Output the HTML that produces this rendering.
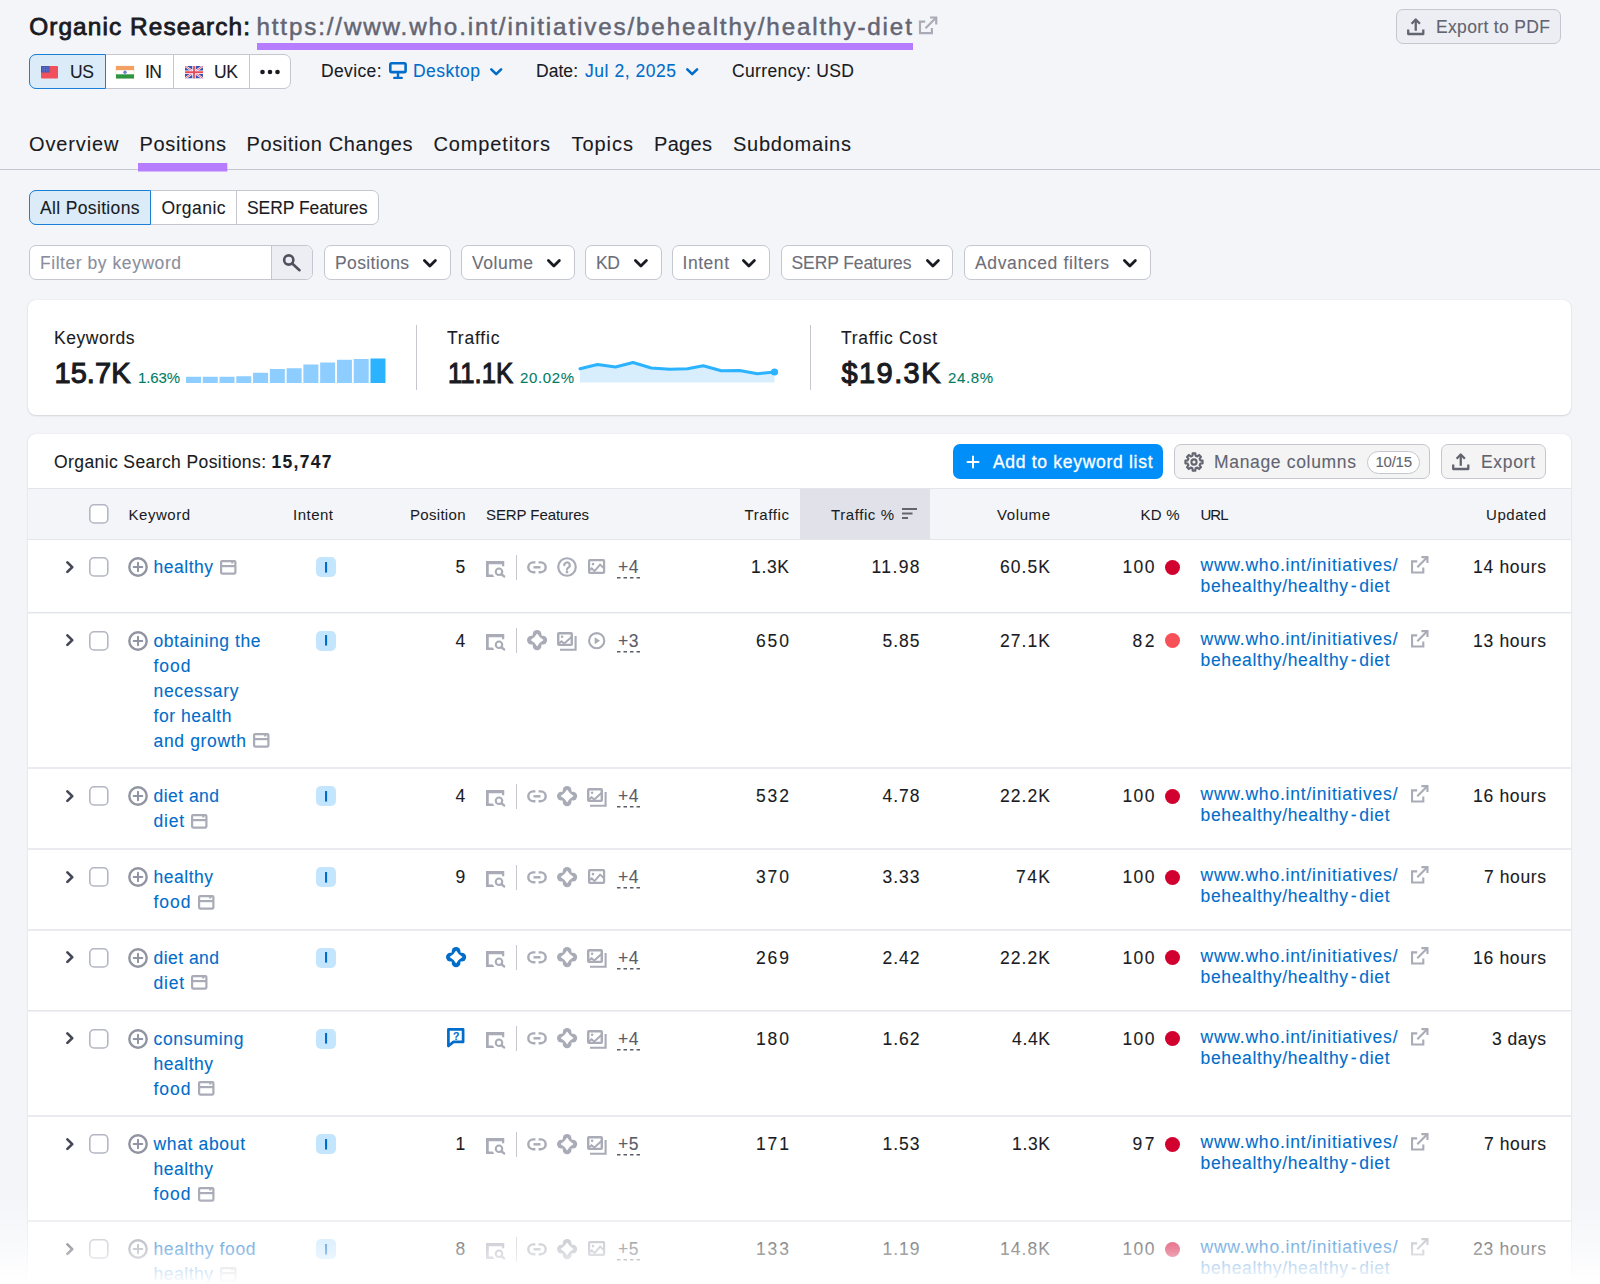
<!DOCTYPE html>
<html lang="en"><head>
<meta charset="utf-8">
<title>Organic Research</title>
<style>
*{box-sizing:border-box;margin:0;padding:0}
html,body{width:1600px;height:1284px;overflow:hidden}
body{background:#f4f5f9;font-family:"Liberation Sans",sans-serif;color:#191b23;position:relative;font-size:17.5px}
.t{position:absolute;white-space:nowrap;-webkit-text-stroke:0.1px currentColor}
.b{position:absolute;display:block;overflow:visible}
</style>
</head>
<body>
<div class="t" style="left: 29.2px; top: 10.8px; font-size: 24.4px; line-height: 32px; font-weight: normal; color: rgb(25, 27, 35); -webkit-text-stroke: 0.85px rgb(25, 27, 35); letter-spacing: 1.091px;">Organic Research:</div>
<div class="t" style="left: 256.4px; top: 11.3px; font-size: 24.2px; line-height: 31px; font-weight: normal; color: rgb(99, 101, 115); -webkit-text-stroke: 0.5px rgb(99, 101, 115); letter-spacing: 1.866px;">https://www.who.int/initiatives/behealthy/healthy-diet</div>
<div class="b" style="left:256.5px;top:42.8px;width:656.6px;height:6.9px;background:#b77dff"></div>
<svg class="b" style="left:919px;top:16px" width="19" height="19" viewBox="0 0 19 19" fill="none" stroke="#a9abb6" stroke-width="2.200"><path d="M6.200 5.560H1V17.100H12.900V12.100"></path><path d="M11 1.500H17.250V8.400"></path><path d="M17.250 1.500L6.500 12.250"></path></svg>
<div class="b" style="left:1396px;top:9px;width:165px;height:35px;background:#eceef3;border:1px solid #c4c7cf;border-radius:7px"></div>
<svg class="b" style="left:1406.9px;top:18.1px" width="17.5" height="17.2" viewBox="0 0 17.5 17.2" fill="none" stroke="#62646f" stroke-width="2.300" stroke-linejoin="round"><path d="M8.750 1.600V12.800"></path><path d="M4.600 5.700L8.750 1.500L12.900 5.700"></path><path d="M1.200 11.400V16H16.300V11.400"></path></svg>
<div class="t" style="left: 1436px; top: 15.8px; font-size: 17.5px; line-height: 23px; font-weight: normal; color: rgb(98, 100, 111); letter-spacing: 0.341px;">Export to PDF</div>
<div class="b" style="left:29px;top:54px;width:262px;height:35px;background:#fff;border:1px solid #c4c7cf;border-radius:7px"></div>
<div class="b" style="left:29px;top:54px;width:76.5px;height:35px;background:#dcebf8;border:1.5px solid #1a7fd6;border-radius:7px 0 0 7px"></div>
<div class="b" style="left:173px;top:55px;width:1px;height:33px;background:#c4c7cf"></div>
<div class="b" style="left:249px;top:55px;width:1px;height:33px;background:#c4c7cf"></div>
<svg class="b" style="left:41px;top:66.2px" width="17" height="12.5" viewBox="0 0 17 12.5"><rect width="17" height="12.500" rx="1" fill="#f0505c"></rect><rect width="8.500" height="6.500" fill="#4456b4"></rect><path d="M1.500 1.800h6M1.500 3.400h6M1.500 5h6" stroke="#8e9be0" stroke-width="0.700" stroke-dasharray="0.800 0.900"></path></svg>
<div class="t" style="left: 70px; top: 60.8px; font-size: 17.5px; line-height: 23px; font-weight: normal; color: rgb(25, 27, 35); letter-spacing: -0.313px;">US</div>
<svg class="b" style="left:116px;top:66.2px" width="18" height="12.5" viewBox="0 0 18 12.5"><rect width="18" height="12.500" fill="#fff" stroke="#e6d9c8" stroke-width="0.600"></rect><rect width="18" height="4.200" fill="#f3a062"></rect><rect y="8.300" width="18" height="4.200" fill="#2e9440"></rect><circle cx="9" cy="6.250" r="1.700" fill="#6b7fd0"></circle></svg>
<div class="t" style="left: 145px; top: 60.8px; font-size: 17.5px; line-height: 23px; font-weight: normal; color: rgb(25, 27, 35); letter-spacing: -0.5px;">IN</div>
<svg class="b" style="left:185px;top:66.2px" width="18" height="12.5" viewBox="0 0 18 12.5"><clipPath id="ukc"><rect width="18" height="12.500"></rect></clipPath><g clip-path="url(#ukc)"><rect width="18" height="12.500" fill="#3b50b0"></rect><path d="M0 0L18 12.500M18 0L0 12.500" stroke="#fff" stroke-width="2.200"></path><path d="M0 0L18 12.500M18 0L0 12.500" stroke="#e8485c" stroke-width="0.900"></path><path d="M9 0V12.500M0 6.250H18" stroke="#fff" stroke-width="3.400"></path><path d="M9 0V12.500M0 6.250H18" stroke="#e8485c" stroke-width="1.800"></path></g></svg>
<div class="t" style="left: 214px; top: 60.8px; font-size: 17.5px; line-height: 23px; font-weight: normal; color: rgb(25, 27, 35); letter-spacing: -0.313px;">UK</div>
<svg class="b" style="left:260px;top:69px" width="20" height="6" viewBox="0 0 20 6" fill="#191b23"><circle cx="2.500" cy="3" r="2.300"></circle><circle cx="10" cy="3" r="2.300"></circle><circle cx="17.500" cy="3" r="2.300"></circle></svg>
<div class="t" style="left: 321px; top: 59.8px; font-size: 17.5px; line-height: 23px; font-weight: normal; color: rgb(25, 27, 35); letter-spacing: 0.357px;">Device:</div>
<svg class="b" style="left:388.7px;top:62.1px" width="18" height="18" viewBox="0 0 18 18" fill="none" stroke="#006dca"><rect x="1.300" y="1.300" width="15.300" height="8.800" rx="1.300" stroke-width="2.600"></rect><path d="M9 10.500v4.500" stroke-width="2.400"></path><path d="M5.300 15.900h7.400" stroke-width="2.400" stroke-linecap="round"></path></svg>
<div class="t" style="left: 413px; top: 59.8px; font-size: 17.5px; line-height: 23px; font-weight: normal; color: rgb(0, 109, 202); letter-spacing: 0.466px;">Desktop</div>
<svg class="b" style="left:489.8px;top:67.9px" width="12.4" height="7.5" viewBox="0 0 12.4 7.5" fill="none" stroke="#006dca" stroke-width="2.600" stroke-linecap="round" stroke-linejoin="round"><path d="M1.300 1.300l4.900 4.900 4.900-4.900"></path></svg>
<div class="t" style="left: 536px; top: 59.8px; font-size: 17.5px; line-height: 23px; font-weight: normal; color: rgb(25, 27, 35); letter-spacing: 0.043px;">Date:</div>
<div class="t" style="left: 585px; top: 59.8px; font-size: 17.5px; line-height: 23px; font-weight: normal; color: rgb(0, 109, 202); letter-spacing: 0.537px;">Jul 2, 2025</div>
<svg class="b" style="left:685.6px;top:67.9px" width="12.4" height="7.5" viewBox="0 0 12.4 7.5" fill="none" stroke="#006dca" stroke-width="2.600" stroke-linecap="round" stroke-linejoin="round"><path d="M1.300 1.300l4.900 4.900 4.900-4.900"></path></svg>
<div class="t" style="left: 732px; top: 59.8px; font-size: 17.5px; line-height: 23px; font-weight: normal; color: rgb(25, 27, 35); letter-spacing: 0.361px;">Currency: USD</div>
<div class="t" style="left: 29px; top: 131.3px; font-size: 20px; line-height: 26px; font-weight: normal; color: rgb(25, 27, 35); letter-spacing: 0.877px;">Overview</div>
<div class="t" style="left: 139.5px; top: 131.3px; font-size: 20px; line-height: 26px; font-weight: normal; color: rgb(25, 27, 35); letter-spacing: 0.668px;">Positions</div>
<div class="t" style="left: 246.5px; top: 131.3px; font-size: 20px; line-height: 26px; font-weight: normal; color: rgb(25, 27, 35); letter-spacing: 0.615px;">Position Changes</div>
<div class="t" style="left: 433.5px; top: 131.3px; font-size: 20px; line-height: 26px; font-weight: normal; color: rgb(25, 27, 35); letter-spacing: 0.869px;">Competitors</div>
<div class="t" style="left: 571.5px; top: 131.3px; font-size: 20px; line-height: 26px; font-weight: normal; color: rgb(25, 27, 35); letter-spacing: 0.959px;">Topics</div>
<div class="t" style="left: 654px; top: 131.3px; font-size: 20px; line-height: 26px; font-weight: normal; color: rgb(25, 27, 35); letter-spacing: 0.32px;">Pages</div>
<div class="t" style="left: 733px; top: 131.3px; font-size: 20px; line-height: 26px; font-weight: normal; color: rgb(25, 27, 35); letter-spacing: 0.757px;">Subdomains</div>
<div class="b" style="left:0px;top:169.2px;width:1600px;height:1px;background:#c4c7cf"></div>
<svg class="b" style="left:138px;top:163.3px" width="89.3" height="8.5" viewBox="0 0 89.3 8.5"><rect width="89.300" height="8.500" fill="#b77dff"></rect></svg>
<div class="b" style="left:28.5px;top:190.25px;width:350px;height:34.5px;background:#fff;border:1px solid #c4c7cf;border-radius:7px"></div>
<div class="b" style="left:28.5px;top:190.25px;width:122.5px;height:34.5px;background:#dcebf8;border:1.5px solid #1a7fd6;border-radius:7px 0 0 7px"></div>
<div class="b" style="left:236px;top:191.2px;width:1px;height:32.5px;background:#c4c7cf"></div>
<div class="t" style="left: 40px; top: 196.8px; font-size: 17.5px; line-height: 23px; font-weight: normal; color: rgb(25, 27, 35); letter-spacing: 0.348px;">All Positions</div>
<div class="t" style="left: 161.5px; top: 196.8px; font-size: 17.5px; line-height: 23px; font-weight: normal; color: rgb(25, 27, 35); letter-spacing: 0.453px;">Organic</div>
<div class="t" style="left: 247px; top: 196.8px; font-size: 17.5px; line-height: 23px; font-weight: normal; color: rgb(25, 27, 35); letter-spacing: -0.064px;">SERP Features</div>
<div class="b" style="left:28.5px;top:245px;width:284px;height:34.5px;background:#fff;border:1px solid #c4c7cf;border-radius:7px"></div>
<div class="b" style="left:271px;top:246px;width:41px;height:32.5px;background:#eceef3;border-left:1px solid #c4c7cf;border-radius:0 6px 6px 0"></div>
<svg class="b" style="left:283px;top:254px" width="18" height="18" viewBox="0 0 18 18" fill="none" stroke="#4f525e" stroke-width="2.600" stroke-linecap="round"><circle cx="5.750" cy="6" r="4.600"></circle><path d="M9.200 9.500l7.300 6.700"></path></svg>
<div class="t" style="left: 40px; top: 251.8px; font-size: 17.5px; line-height: 23px; font-weight: normal; color: rgb(138, 142, 155); letter-spacing: 0.546px;">Filter by keyword</div>
<div class="b" style="left:323.5px;top:245px;width:127.5px;height:34.5px;background:#fff;border:1px solid #c4c7cf;border-radius:7px"></div>
<div class="t" style="left: 335px; top: 251.8px; font-size: 17.5px; line-height: 23px; font-weight: normal; color: rgb(108, 110, 121); letter-spacing: 0.373px;">Positions</div>
<svg class="b" style="left:422.5px;top:259.4px" width="13.8" height="8.4" viewBox="0 0 13.8 8.4" fill="none" stroke="#191b23" stroke-width="2.800" stroke-linecap="round" stroke-linejoin="round"><path d="M1.400 1.400l5.500 5.500 5.500-5.500"></path></svg>
<div class="b" style="left:460.5px;top:245px;width:114px;height:34.5px;background:#fff;border:1px solid #c4c7cf;border-radius:7px"></div>
<div class="t" style="left: 472px; top: 251.8px; font-size: 17.5px; line-height: 23px; font-weight: normal; color: rgb(108, 110, 121); letter-spacing: 0.525px;">Volume</div>
<svg class="b" style="left:546.5px;top:259.4px" width="13.8" height="8.4" viewBox="0 0 13.8 8.4" fill="none" stroke="#191b23" stroke-width="2.800" stroke-linecap="round" stroke-linejoin="round"><path d="M1.400 1.400l5.500 5.500 5.500-5.500"></path></svg>
<div class="b" style="left:584.5px;top:245px;width:77px;height:34.5px;background:#fff;border:1px solid #c4c7cf;border-radius:7px"></div>
<div class="t" style="left: 596px; top: 251.8px; font-size: 17.5px; line-height: 23px; font-weight: normal; color: rgb(108, 110, 121); letter-spacing: -0.313px;">KD</div>
<svg class="b" style="left:633.5px;top:259.4px" width="13.8" height="8.4" viewBox="0 0 13.8 8.4" fill="none" stroke="#191b23" stroke-width="2.800" stroke-linecap="round" stroke-linejoin="round"><path d="M1.400 1.400l5.500 5.500 5.500-5.500"></path></svg>
<div class="b" style="left:671.5px;top:245px;width:98.5px;height:34.5px;background:#fff;border:1px solid #c4c7cf;border-radius:7px"></div>
<div class="t" style="left: 682.5px; top: 251.8px; font-size: 17.5px; line-height: 23px; font-weight: normal; color: rgb(108, 110, 121); letter-spacing: 0.541px;">Intent</div>
<svg class="b" style="left:742.0px;top:259.4px" width="13.8" height="8.4" viewBox="0 0 13.8 8.4" fill="none" stroke="#191b23" stroke-width="2.800" stroke-linecap="round" stroke-linejoin="round"><path d="M1.400 1.400l5.500 5.500 5.500-5.500"></path></svg>
<div class="b" style="left:780.5px;top:245px;width:172.5px;height:34.5px;background:#fff;border:1px solid #c4c7cf;border-radius:7px"></div>
<div class="t" style="left: 791.5px; top: 251.8px; font-size: 17.5px; line-height: 23px; font-weight: normal; color: rgb(108, 110, 121); letter-spacing: -0.105px;">SERP Features</div>
<svg class="b" style="left:925.5px;top:259.4px" width="13.8" height="8.4" viewBox="0 0 13.8 8.4" fill="none" stroke="#191b23" stroke-width="2.800" stroke-linecap="round" stroke-linejoin="round"><path d="M1.400 1.400l5.500 5.500 5.500-5.500"></path></svg>
<div class="b" style="left:963.5px;top:245px;width:187px;height:34.5px;background:#fff;border:1px solid #c4c7cf;border-radius:7px"></div>
<div class="t" style="left: 975px; top: 251.8px; font-size: 17.5px; line-height: 23px; font-weight: normal; color: rgb(108, 110, 121); letter-spacing: 0.632px;">Advanced filters</div>
<svg class="b" style="left:1123.0px;top:259.4px" width="13.8" height="8.4" viewBox="0 0 13.8 8.4" fill="none" stroke="#191b23" stroke-width="2.800" stroke-linecap="round" stroke-linejoin="round"><path d="M1.400 1.400l5.500 5.500 5.500-5.500"></path></svg>
<div class="b" style="left:28px;top:300px;width:1543px;height:115px;background:#fff;border-radius:7.500px;box-shadow:0 0 1px rgba(25,27,35,.16),0 1px 2px rgba(25,27,35,.12)"></div>
<div class="t" style="left: 54px; top: 326.8px; font-size: 17.5px; line-height: 23px; font-weight: normal; color: rgb(25, 27, 35); letter-spacing: 0.522px;">Keywords</div>
<div class="t" style="left: 54.5px; top: 354.3px; font-size: 29px; line-height: 38px; font-weight: normal; color: rgb(25, 27, 35); -webkit-text-stroke: 1.1px rgb(25, 27, 35); letter-spacing: 0.051px;">15.7K</div>
<div class="t" style="left: 138px; top: 367.8px; font-size: 15px; line-height: 20px; font-weight: normal; color: rgb(0, 124, 101); letter-spacing: -0.137px;">1.63%</div>
<svg class="b" style="left:186.2px;top:357.5px" width="201" height="25" viewBox="0 0 201 25"><rect x="0.00" y="18.75" width="15" height="6.25" fill="#8ecdff"></rect><rect x="16.77" y="18.75" width="15" height="6.25" fill="#8ecdff"></rect><rect x="33.54" y="18.75" width="15" height="6.25" fill="#8ecdff"></rect><rect x="50.31" y="18.25" width="15" height="6.75" fill="#8ecdff"></rect><rect x="67.08" y="14.75" width="15" height="10.25" fill="#8ecdff"></rect><rect x="83.85" y="11.00" width="15" height="14" fill="#8ecdff"></rect><rect x="100.62" y="10.25" width="15" height="14.75" fill="#8ecdff"></rect><rect x="117.39" y="6.50" width="15" height="18.5" fill="#8ecdff"></rect><rect x="134.16" y="4.50" width="15" height="20.5" fill="#8ecdff"></rect><rect x="150.93" y="1.75" width="15" height="23.25" fill="#8ecdff"></rect><rect x="167.70" y="1.00" width="15" height="24" fill="#8ecdff"></rect><rect x="184.47" y="0.50" width="15" height="24.5" fill="#2bb3ff"></rect></svg>
<div class="b" style="left:416px;top:325px;width:1px;height:65px;background:#c4c7cf"></div>
<div class="t" style="left: 447px; top: 326.8px; font-size: 17.5px; line-height: 23px; font-weight: normal; color: rgb(25, 27, 35); letter-spacing: 0.807px;">Traffic</div>
<div class="t" style="left: 447.5px; top: 354.3px; font-size: 29px; line-height: 38px; font-weight: normal; color: rgb(25, 27, 35); -webkit-text-stroke: 1.1px rgb(25, 27, 35); transform: scaleX(0.8827); transform-origin: left center;">11.1K</div>
<div class="t" style="left: 520px; top: 367.8px; font-size: 15px; line-height: 20px; font-weight: normal; color: rgb(0, 124, 101); letter-spacing: 0.625px;">20.02%</div>
<svg class="b" style="left:580px;top:355px" width="200" height="28" viewBox="0 0 200 28"><path d="M0.00 13.75 L17.50 9.50 L35.50 12.00 L53.00 7.50 L71.25 13.00 L90.00 14.25 L107.50 13.75 L123.25 10.75 L141.25 15.75 L159.50 15.50 L177.50 18.75 L194.50 17.00 L194.500 27.500 L0 27.500 Z" fill="#d8eefc"></path><path d="M0.00 13.75 L17.50 9.50 L35.50 12.00 L53.00 7.50 L71.25 13.00 L90.00 14.25 L107.50 13.75 L123.25 10.75 L141.25 15.75 L159.50 15.50 L177.50 18.75 L194.50 17.00" fill="none" stroke="#2bb3ff" stroke-width="3" stroke-linejoin="round" stroke-linecap="round"></path><circle cx="194.500" cy="17" r="3.600" fill="#2bb3ff"></circle></svg>
<div class="b" style="left:810px;top:325px;width:1px;height:65px;background:#c4c7cf"></div>
<div class="t" style="left: 841px; top: 326.8px; font-size: 17.5px; line-height: 23px; font-weight: normal; color: rgb(25, 27, 35); letter-spacing: 0.682px;">Traffic Cost</div>
<div class="t" style="left: 841.5px; top: 354.3px; font-size: 29px; line-height: 38px; font-weight: normal; color: rgb(25, 27, 35); -webkit-text-stroke: 1.1px rgb(25, 27, 35); letter-spacing: 1.416px;">$19.3K</div>
<div class="t" style="left: 948px; top: 367.8px; font-size: 15px; line-height: 20px; font-weight: normal; color: rgb(0, 124, 101); letter-spacing: 0.613px;">24.8%</div>
<div class="b" style="left:28px;top:434px;width:1543px;height:900px;background:#fff;border-radius:7.500px;box-shadow:0 0 1px rgba(25,27,35,.16),0 1px 2px rgba(25,27,35,.12)"></div>
<div class="t" style="left: 54px; top: 450.8px; font-size: 17.5px; line-height: 23px; font-weight: normal; color: rgb(25, 27, 35); letter-spacing: 0.403px;">Organic Search Positions:</div>
<div class="t" style="left: 271.5px; top: 450.8px; font-size: 17.5px; line-height: 23px; font-weight: bold; color: rgb(25, 27, 35); letter-spacing: 1.294px;">15,747</div>
<div class="b" style="left:953px;top:444.4px;width:210px;height:35.1px;background:#008ff8;border-radius:7px"></div>
<svg class="b" style="left:967px;top:456px" width="12" height="12" viewBox="0 0 12 12" fill="none" stroke="#fff" stroke-width="2" stroke-linecap="round"><path d="M6 0.500v11M0.500 6h11"></path></svg>
<div class="t" style="left: 993px; top: 450.8px; font-size: 17.5px; line-height: 23px; font-weight: normal; color: rgb(255, 255, 255); -webkit-text-stroke: 0.3px rgb(255, 255, 255); letter-spacing: 0.701px;">Add to keyword list</div>
<div class="b" style="left:1173.8px;top:444.4px;width:256.4px;height:35.1px;background:#f4f4f5;border:1px solid #c4c7cf;border-radius:7px"></div>
<svg class="b" style="left:1183.9px;top:452.2px" width="20" height="20" viewBox="0 0 20 20" fill="none" stroke="#62646f" stroke-width="2.100" stroke-linejoin="round"><path d="M8.43 3.69L8.64 1.41L11.36 1.41L11.57 3.69L13.35 4.43L15.11 2.96L17.04 4.89L15.57 6.65L16.31 8.43L18.59 8.64L18.59 11.36L16.31 11.57L15.57 13.35L17.04 15.11L15.11 17.04L13.35 15.57L11.57 16.31L11.36 18.59L8.64 18.59L8.43 16.31L6.65 15.57L4.89 17.04L2.96 15.11L4.43 13.35L3.69 11.57L1.41 11.36L1.41 8.64L3.69 8.43L4.43 6.65L2.96 4.89L4.89 2.96L6.65 4.43Z"></path><circle cx="10" cy="10" r="2.600"></circle></svg>
<div class="t" style="left: 1214px; top: 450.8px; font-size: 17.5px; line-height: 23px; font-weight: normal; color: rgb(98, 100, 111); letter-spacing: 0.671px;">Manage columns</div>
<div class="b" style="left:1367px;top:451px;width:53px;height:23px;background:#fff;border:1px solid #c4c7cf;border-radius:12px"></div>
<div class="t" style="left: 1375.5px; top: 451.8px; font-size: 15px; line-height: 20px; font-weight: normal; color: rgb(98, 100, 111); letter-spacing: -0.262px;">10/15</div>
<div class="b" style="left:1440.8px;top:444.4px;width:105.4px;height:35.1px;background:#f4f4f5;border:1px solid #c4c7cf;border-radius:7px"></div>
<svg class="b" style="left:1451.8px;top:453.2px" width="17.5" height="17.2" viewBox="0 0 17.5 17.2" fill="none" stroke="#62646f" stroke-width="2.300" stroke-linejoin="round"><path d="M8.750 1.600V12.800"></path><path d="M4.600 5.700L8.750 1.500L12.900 5.700"></path><path d="M1.200 11.400V16H16.300V11.400"></path></svg>
<div class="t" style="left: 1481px; top: 450.8px; font-size: 17.5px; line-height: 23px; font-weight: normal; color: rgb(98, 100, 111); letter-spacing: 0.684px;">Export</div>
<div class="b" style="left:28px;top:488px;width:1543px;height:52px;background:#f4f5f9;border-top:1.3px solid #e3e5ec;border-bottom:1.5px solid #e3e5ec"></div>
<div class="b" style="left:800px;top:489.4px;width:129.7px;height:49.3px;background:#e0e1e9"></div>
<svg class="b" style="left:88.60000000000001px;top:504.1px" width="19.6" height="19.8" viewBox="0 0 19.6 19.8"><rect x="0.800" y="0.800" width="18" height="18.200" rx="4.300" fill="#fff" stroke="#b4b7c3" stroke-width="1.600"></rect></svg>
<div class="t" style="left: 128.5px; top: 504.8px; font-size: 15px; line-height: 20px; font-weight: normal; color: rgb(25, 27, 35); -webkit-text-stroke: 0.05px currentcolor; letter-spacing: 0.523px;">Keyword</div>
<div class="t" style="left: 293px; top: 504.8px; font-size: 15px; line-height: 20px; font-weight: normal; color: rgb(25, 27, 35); -webkit-text-stroke: 0.05px currentcolor; letter-spacing: 0.494px;">Intent</div>
<div class="t" style="left: 410px; top: 504.8px; font-size: 15px; line-height: 20px; font-weight: normal; color: rgb(25, 27, 35); -webkit-text-stroke: 0.05px currentcolor; letter-spacing: 0.304px;">Position</div>
<div class="t" style="left: 486px; top: 504.8px; font-size: 15px; line-height: 20px; font-weight: normal; color: rgb(25, 27, 35); -webkit-text-stroke: 0.05px currentcolor; letter-spacing: -0.079px;">SERP Features</div>
<div class="t" style="left: 744.5px; top: 504.8px; font-size: 15px; line-height: 20px; font-weight: normal; color: rgb(25, 27, 35); -webkit-text-stroke: 0.05px currentcolor; letter-spacing: 0.609px;">Traffic</div>
<div class="t" style="left: 831px; top: 504.8px; font-size: 15px; line-height: 20px; font-weight: normal; color: rgb(25, 27, 35); -webkit-text-stroke: 0.05px currentcolor; letter-spacing: 0.58px;">Traffic %</div>
<svg class="b" style="left:902px;top:508px" width="15" height="11" viewBox="0 0 15 11" fill="none" stroke="#62646f" stroke-width="2"><path d="M0 1h15M0 5.500h10.500M0 10h6"></path></svg>
<div class="t" style="left: 997px; top: 504.8px; font-size: 15px; line-height: 20px; font-weight: normal; color: rgb(25, 27, 35); -webkit-text-stroke: 0.05px currentcolor; letter-spacing: 0.591px;">Volume</div>
<div class="t" style="left: 1140.5px; top: 504.8px; font-size: 15px; line-height: 20px; font-weight: normal; color: rgb(25, 27, 35); -webkit-text-stroke: 0.05px currentcolor; letter-spacing: 0.219px;">KD %</div>
<div class="t" style="left: 1200.5px; top: 504.8px; font-size: 15px; line-height: 20px; font-weight: normal; color: rgb(25, 27, 35); -webkit-text-stroke: 0.05px currentcolor; letter-spacing: -1.008px;">URL</div>
<div class="t" style="left: 1486px; top: 504.8px; font-size: 15px; line-height: 20px; font-weight: normal; color: rgb(25, 27, 35); -webkit-text-stroke: 0.05px currentcolor; letter-spacing: 0.547px;">Updated</div>
<svg class="b" style="left:28px;top:0px" width="1543" height="1284" viewBox="0 0 1543 1284"><rect x="0" y="611.95" width="1543" height="1.500" fill="#e3e5ec"></rect><rect x="0" y="767.25" width="1543" height="1.500" fill="#e3e5ec"></rect><rect x="0" y="848.25" width="1543" height="1.500" fill="#e3e5ec"></rect><rect x="0" y="929.25" width="1543" height="1.500" fill="#e3e5ec"></rect><rect x="0" y="1010.05" width="1543" height="1.500" fill="#e3e5ec"></rect><rect x="0" y="1115.25" width="1543" height="1.500" fill="#e3e5ec"></rect><rect x="0" y="1220.25" width="1543" height="1.500" fill="#e3e5ec"></rect></svg>
<svg class="b" style="left:65.5px;top:560.85px" width="7.7" height="12.3" viewBox="0 0 7.7 12.3" fill="none" stroke="#454855" stroke-width="2.700" stroke-linecap="round" stroke-linejoin="round"><path d="M1.400 1.400L6.250 6.150L1.400 10.900"></path></svg>
<svg class="b" style="left:88.60000000000001px;top:557.1px" width="19.6" height="19.8" viewBox="0 0 19.6 19.8"><rect x="0.800" y="0.800" width="18" height="18.200" rx="4.300" fill="#fff" stroke="#b4b7c3" stroke-width="1.600"></rect></svg>
<svg class="b" style="left:128px;top:557px" width="20" height="20" viewBox="0 0 20 20" fill="none" stroke="#9195a2" stroke-linecap="round"><circle cx="10" cy="10" r="8.700" stroke-width="2.400"></circle><path d="M10 5.700v8.600M5.700 10h8.600" stroke-width="2"></path></svg>
<div class="t" style="left: 153.5px; top: 554.8px; font-size: 17.5px; line-height: 25px; font-weight: normal; color: rgb(0, 109, 202); letter-spacing: 0.51px;">healthy</div>
<svg class="b" style="left:220.0px;top:559.9px" width="16.5" height="15" viewBox="0 0 16.5 15" fill="none" stroke="#a9abb6" stroke-width="2.200"><rect x="1.100" y="1.100" width="14.300" height="12.500" rx="1"></rect><path d="M1 6.100h14.500"></path><path d="M12.300 1v2.500"></path></svg>
<div class="b" style="left:315.5px;top:557px;width:20px;height:20px;background:#c4e5fe;border-radius:5px"></div>
<svg class="b" style="left:324.5px;top:561.8px" width="2.1" height="10.6" viewBox="0 0 2.1 10.6"><rect width="2.100" height="10.600" fill="#006dca"></rect></svg>
<div class="t" style="right:1134.7px;top:555.80px;font-size:17.5px;line-height:23px;font-weight:normal;color:#191b23;">5</div>
<svg class="b" style="left:486px;top:560.75px" width="19" height="16" viewBox="0 0 19 16"><path d="M0 0h18.250v5.250h-2.250v-2h-13.250v10.250h4l1.600 2.500h-8.350z" fill="#a9abb6"></path><circle cx="13" cy="10.750" r="3.250" fill="none" stroke="#a9abb6" stroke-width="2.100"></circle><path d="M15.400 13.200l2.700 2.200" stroke="#a9abb6" stroke-width="2.400" stroke-linecap="round"></path></svg>
<div class="b" style="left:516px;top:554.5px;width:1.2px;height:25px;background:#c4c7cf"></div>
<svg class="b" style="left:527.1px;top:560.7px" width="20" height="13" viewBox="0 0 20 13" fill="none" stroke="#a9abb6" stroke-width="2.400"><path d="M8.400 1.400H6.200A4.900 4.900 0 0 0 6.200 11.200H8.400"></path><path d="M11.600 1.400H13.800A4.900 4.900 0 0 1 13.800 11.200H11.600"></path><path d="M6.500 6.300H13.500"></path></svg>
<svg class="b" style="left:557px;top:557px" width="20" height="20" viewBox="0 0 20 20" fill="none" stroke="#a9abb6" stroke-width="2.200"><circle cx="10" cy="10" r="8.750"></circle><path d="M7.300 8.200a2.750 2.750 0 1 1 3.900 2.500c-.800.400-1.200.900-1.200 1.800" stroke-linecap="round"></path><circle cx="10" cy="15" r="0.700" stroke-width="1.400"></circle></svg>
<svg class="b" style="left:588.1999999999999px;top:559.4px" width="17.2" height="15" viewBox="0 0 17.2 15"><rect x="1.100" y="1.100" width="15" height="12.700" rx="0.800" fill="none" stroke="#a9abb6" stroke-width="2.200"></rect><circle cx="5" cy="5.100" r="1.300" fill="#a9abb6"></circle><path d="M2 11.100l1.800-1.700 2.700 2.700 5.600-6.500 3.400 3.100" fill="none" stroke="#a9abb6" stroke-width="2"></path></svg>
<div class="t" style="left: 618px; top: 555.8px; font-size: 17.5px; line-height: 23px; font-weight: normal; color: rgb(89, 92, 105); letter-spacing: 0.547px;">+4</div>
<svg class="b" style="left:617.2px;top:577px" width="23" height="2" viewBox="0 0 23 2"><path d="M0 .750h23" stroke="#595c69" stroke-width="1.400" stroke-dasharray="3.500 3"></path></svg>
<div class="t" style="right: 811px; top: 555.8px; font-size: 17.5px; line-height: 23px; font-weight: normal; color: rgb(25, 27, 35); letter-spacing: 0.667px; margin-right: -0.667px;">1.3K</div>
<div class="t" style="right: 680.5px; top: 555.8px; font-size: 17.5px; line-height: 23px; font-weight: normal; color: rgb(25, 27, 35); letter-spacing: 1.375px; margin-right: -1.375px;">11.98</div>
<div class="t" style="right: 550px; top: 555.8px; font-size: 17.5px; line-height: 23px; font-weight: normal; color: rgb(25, 27, 35); letter-spacing: 1.066px; margin-right: -1.066px;">60.5K</div>
<div class="t" style="right: 445.6px; top: 555.8px; font-size: 17.5px; line-height: 23px; font-weight: normal; color: rgb(25, 27, 35); letter-spacing: 1.398px; margin-right: -1.398px;">100</div>
<div class="b" style="left:1165px;top:559.5px;width:15px;height:15px;background:#d1002f;border-radius:50%"></div>
<div class="t" style="left: 1200.5px; top: 554.8px; font-size: 17.5px; line-height: 21px; font-weight: normal; color: rgb(0, 109, 202); letter-spacing: 0.784px;">www.who.int/initiatives/</div>
<div class="t" style="left: 1200.5px; top: 575.8px; font-size: 17.5px; line-height: 21px; font-weight: normal; color: rgb(0, 109, 202); letter-spacing: 0.645px;">behealthy/healthy - diet</div>
<svg class="b" style="left:1411px;top:556.25px" width="18" height="18" viewBox="0 0 18 18" fill="none" stroke="#a9abb6" stroke-width="2.100"><path d="M6.200 5.400H1.050V16.450H12.300V11.400"></path><path d="M10.400 1.100H16.450V7.100"></path><path d="M16.450 1.100L6.300 11.250"></path></svg>
<div class="t" style="right: 54px; top: 555.8px; font-size: 17.5px; line-height: 23px; font-weight: normal; color: rgb(25, 27, 35); letter-spacing: 0.699px; margin-right: -0.699px;">14 hours</div>
<svg class="b" style="left:65.5px;top:634.35px" width="7.7" height="12.3" viewBox="0 0 7.7 12.3" fill="none" stroke="#454855" stroke-width="2.700" stroke-linecap="round" stroke-linejoin="round"><path d="M1.400 1.400L6.250 6.150L1.400 10.900"></path></svg>
<svg class="b" style="left:88.60000000000001px;top:630.6px" width="19.6" height="19.8" viewBox="0 0 19.6 19.8"><rect x="0.800" y="0.800" width="18" height="18.200" rx="4.300" fill="#fff" stroke="#b4b7c3" stroke-width="1.600"></rect></svg>
<svg class="b" style="left:128px;top:630.5px" width="20" height="20" viewBox="0 0 20 20" fill="none" stroke="#9195a2" stroke-linecap="round"><circle cx="10" cy="10" r="8.700" stroke-width="2.400"></circle><path d="M10 5.700v8.600M5.700 10h8.600" stroke-width="2"></path></svg>
<div class="t" style="left: 153.5px; top: 628.8px; font-size: 17.5px; line-height: 25px; font-weight: normal; color: rgb(0, 109, 202); letter-spacing: 0.564px;">obtaining the</div>
<div class="t" style="left: 153.5px; top: 653.8px; font-size: 17.5px; line-height: 25px; font-weight: normal; color: rgb(0, 109, 202); letter-spacing: 0.979px;">food</div>
<div class="t" style="left: 153.5px; top: 678.8px; font-size: 17.5px; line-height: 25px; font-weight: normal; color: rgb(0, 109, 202); letter-spacing: 0.654px;">necessary</div>
<div class="t" style="left: 153.5px; top: 703.8px; font-size: 17.5px; line-height: 25px; font-weight: normal; color: rgb(0, 109, 202); letter-spacing: 0.559px;">for health</div>
<div class="t" style="left: 153.5px; top: 728.8px; font-size: 17.5px; line-height: 25px; font-weight: normal; color: rgb(0, 109, 202); letter-spacing: 0.656px;">and growth</div>
<svg class="b" style="left:253.0px;top:733.4px" width="16.5" height="15" viewBox="0 0 16.5 15" fill="none" stroke="#a9abb6" stroke-width="2.200"><rect x="1.100" y="1.100" width="14.300" height="12.500" rx="1"></rect><path d="M1 6.100h14.500"></path><path d="M12.300 1v2.500"></path></svg>
<div class="b" style="left:315.5px;top:630.5px;width:20px;height:20px;background:#c4e5fe;border-radius:5px"></div>
<svg class="b" style="left:324.5px;top:635.3px" width="2.1" height="10.6" viewBox="0 0 2.1 10.6"><rect width="2.100" height="10.600" fill="#006dca"></rect></svg>
<div class="t" style="right:1134.7px;top:629.80px;font-size:17.5px;line-height:23px;font-weight:normal;color:#191b23;">4</div>
<svg class="b" style="left:486px;top:634.25px" width="19" height="16" viewBox="0 0 19 16"><path d="M0 0h18.250v5.250h-2.250v-2h-13.250v10.250h4l1.600 2.500h-8.350z" fill="#a9abb6"></path><circle cx="13" cy="10.750" r="3.250" fill="none" stroke="#a9abb6" stroke-width="2.100"></circle><path d="M15.400 13.200l2.700 2.200" stroke="#a9abb6" stroke-width="2.400" stroke-linecap="round"></path></svg>
<div class="b" style="left:516px;top:628.0px;width:1.2px;height:25px;background:#c4c7cf"></div>
<svg class="b" style="left:526.9px;top:630.4px" width="20.2" height="20.2" viewBox="0 0 20.2 20.2"><g transform="translate(10.100 10.100)"><circle cx="0" cy="-5.700" r="4.400" fill="#a9abb6"></circle><circle cx="5.700" cy="0" r="4.400" fill="#a9abb6"></circle><circle cx="0" cy="5.700" r="4.400" fill="#a9abb6"></circle><circle cx="-5.700" cy="0" r="4.400" fill="#a9abb6"></circle><circle r="6.400" fill="#a9abb6"></circle><path d="M0 -6.500Q2.300 -2.300 6.500 0Q2.300 2.300 0 6.500Q-2.300 2.300 -6.500 0Q-2.300 -2.300 0 -6.500Z" fill="#fff"></path></g></svg>
<svg class="b" style="left:557.1px;top:632.1px" width="20" height="18" viewBox="0 0 20 18"><rect x="1.200" y="1.200" width="13.600" height="11.700" rx="0.800" fill="none" stroke="#a9abb6" stroke-width="2.400"></rect><circle cx="5.100" cy="4.800" r="1.250" fill="#a9abb6"></circle><path d="M2 11.500l2.500-2.200 2.800 2.200 7.200-6.500" fill="none" stroke="#a9abb6" stroke-width="2"></path><path d="M18.600 4v13.700H3" fill="none" stroke="#a9abb6" stroke-width="2.100"></path></svg>
<svg class="b" style="left:588.3px;top:631.8px" width="17.4" height="17.4" viewBox="0 0 17.4 17.4"><circle cx="8.700" cy="8.700" r="7.600" fill="none" stroke="#a9abb6" stroke-width="2.100"></circle><path d="M6.700 5.200l5.300 3.500-5.300 3.500z" fill="#a9abb6"></path></svg>
<div class="t" style="left: 618px; top: 629.8px; font-size: 17.5px; line-height: 23px; font-weight: normal; color: rgb(89, 92, 105); letter-spacing: 0.547px;">+3</div>
<svg class="b" style="left:617.2px;top:650.5px" width="23" height="2" viewBox="0 0 23 2"><path d="M0 .750h23" stroke="#595c69" stroke-width="1.400" stroke-dasharray="3.500 3"></path></svg>
<div class="t" style="right: 811px; top: 629.8px; font-size: 17.5px; line-height: 23px; font-weight: normal; color: rgb(25, 27, 35); letter-spacing: 1.898px; margin-right: -1.898px;">650</div>
<div class="t" style="right: 680.5px; top: 629.8px; font-size: 17.5px; line-height: 23px; font-weight: normal; color: rgb(25, 27, 35); letter-spacing: 0.979px; margin-right: -0.979px;">5.85</div>
<div class="t" style="right: 550px; top: 629.8px; font-size: 17.5px; line-height: 23px; font-weight: normal; color: rgb(25, 27, 35); letter-spacing: 1.066px; margin-right: -1.066px;">27.1K</div>
<div class="t" style="right: 445.6px; top: 629.8px; font-size: 17.5px; line-height: 23px; font-weight: normal; color: rgb(25, 27, 35); letter-spacing: 2.531px; margin-right: -2.531px;">82</div>
<div class="b" style="left:1165px;top:633.0px;width:15px;height:15px;background:#f65058;border-radius:50%"></div>
<div class="t" style="left: 1200.5px; top: 628.8px; font-size: 17.5px; line-height: 21px; font-weight: normal; color: rgb(0, 109, 202); letter-spacing: 0.784px;">www.who.int/initiatives/</div>
<div class="t" style="left: 1200.5px; top: 649.8px; font-size: 17.5px; line-height: 21px; font-weight: normal; color: rgb(0, 109, 202); letter-spacing: 0.645px;">behealthy/healthy - diet</div>
<svg class="b" style="left:1411px;top:629.75px" width="18" height="18" viewBox="0 0 18 18" fill="none" stroke="#a9abb6" stroke-width="2.100"><path d="M6.200 5.400H1.050V16.450H12.300V11.400"></path><path d="M10.400 1.100H16.450V7.100"></path><path d="M16.450 1.100L6.300 11.250"></path></svg>
<div class="t" style="right: 54px; top: 629.8px; font-size: 17.5px; line-height: 23px; font-weight: normal; color: rgb(25, 27, 35); letter-spacing: 0.699px; margin-right: -0.699px;">13 hours</div>
<svg class="b" style="left:65.5px;top:789.85px" width="7.7" height="12.3" viewBox="0 0 7.7 12.3" fill="none" stroke="#454855" stroke-width="2.700" stroke-linecap="round" stroke-linejoin="round"><path d="M1.400 1.400L6.250 6.150L1.400 10.900"></path></svg>
<svg class="b" style="left:88.60000000000001px;top:786.1px" width="19.6" height="19.8" viewBox="0 0 19.6 19.8"><rect x="0.800" y="0.800" width="18" height="18.200" rx="4.300" fill="#fff" stroke="#b4b7c3" stroke-width="1.600"></rect></svg>
<svg class="b" style="left:128px;top:786px" width="20" height="20" viewBox="0 0 20 20" fill="none" stroke="#9195a2" stroke-linecap="round"><circle cx="10" cy="10" r="8.700" stroke-width="2.400"></circle><path d="M10 5.700v8.600M5.700 10h8.600" stroke-width="2"></path></svg>
<div class="t" style="left: 153.5px; top: 783.8px; font-size: 17.5px; line-height: 25px; font-weight: normal; color: rgb(0, 109, 202); letter-spacing: 0.46px;">diet and</div>
<div class="t" style="left: 153.5px; top: 808.8px; font-size: 17.5px; line-height: 25px; font-weight: normal; color: rgb(0, 109, 202); letter-spacing: 0.76px;">diet</div>
<svg class="b" style="left:191.0px;top:813.9px" width="16.5" height="15" viewBox="0 0 16.5 15" fill="none" stroke="#a9abb6" stroke-width="2.200"><rect x="1.100" y="1.100" width="14.300" height="12.500" rx="1"></rect><path d="M1 6.100h14.500"></path><path d="M12.300 1v2.500"></path></svg>
<div class="b" style="left:315.5px;top:786px;width:20px;height:20px;background:#c4e5fe;border-radius:5px"></div>
<svg class="b" style="left:324.5px;top:790.8px" width="2.1" height="10.6" viewBox="0 0 2.1 10.6"><rect width="2.100" height="10.600" fill="#006dca"></rect></svg>
<div class="t" style="right:1134.7px;top:784.80px;font-size:17.5px;line-height:23px;font-weight:normal;color:#191b23;">4</div>
<svg class="b" style="left:486px;top:789.75px" width="19" height="16" viewBox="0 0 19 16"><path d="M0 0h18.250v5.250h-2.250v-2h-13.250v10.250h4l1.600 2.500h-8.350z" fill="#a9abb6"></path><circle cx="13" cy="10.750" r="3.250" fill="none" stroke="#a9abb6" stroke-width="2.100"></circle><path d="M15.400 13.200l2.700 2.200" stroke="#a9abb6" stroke-width="2.400" stroke-linecap="round"></path></svg>
<div class="b" style="left:516px;top:783.5px;width:1.2px;height:25px;background:#c4c7cf"></div>
<svg class="b" style="left:527.1px;top:789.7px" width="20" height="13" viewBox="0 0 20 13" fill="none" stroke="#a9abb6" stroke-width="2.400"><path d="M8.400 1.400H6.200A4.900 4.900 0 0 0 6.200 11.200H8.400"></path><path d="M11.600 1.400H13.800A4.900 4.900 0 0 1 13.800 11.200H11.600"></path><path d="M6.500 6.300H13.500"></path></svg>
<svg class="b" style="left:556.9px;top:785.9px" width="20.2" height="20.2" viewBox="0 0 20.2 20.2"><g transform="translate(10.100 10.100)"><circle cx="0" cy="-5.700" r="4.400" fill="#a9abb6"></circle><circle cx="5.700" cy="0" r="4.400" fill="#a9abb6"></circle><circle cx="0" cy="5.700" r="4.400" fill="#a9abb6"></circle><circle cx="-5.700" cy="0" r="4.400" fill="#a9abb6"></circle><circle r="6.400" fill="#a9abb6"></circle><path d="M0 -6.500Q2.300 -2.300 6.500 0Q2.300 2.300 0 6.500Q-2.300 2.300 -6.500 0Q-2.300 -2.300 0 -6.500Z" fill="#fff"></path></g></svg>
<svg class="b" style="left:587.1px;top:787.6px" width="20" height="18" viewBox="0 0 20 18"><rect x="1.200" y="1.200" width="13.600" height="11.700" rx="0.800" fill="none" stroke="#a9abb6" stroke-width="2.400"></rect><circle cx="5.100" cy="4.800" r="1.250" fill="#a9abb6"></circle><path d="M2 11.500l2.500-2.200 2.800 2.200 7.200-6.500" fill="none" stroke="#a9abb6" stroke-width="2"></path><path d="M18.600 4v13.700H3" fill="none" stroke="#a9abb6" stroke-width="2.100"></path></svg>
<div class="t" style="left: 618px; top: 784.8px; font-size: 17.5px; line-height: 23px; font-weight: normal; color: rgb(89, 92, 105); letter-spacing: 0.547px;">+4</div>
<svg class="b" style="left:617.2px;top:806px" width="23" height="2" viewBox="0 0 23 2"><path d="M0 .750h23" stroke="#595c69" stroke-width="1.400" stroke-dasharray="3.500 3"></path></svg>
<div class="t" style="right: 811px; top: 784.8px; font-size: 17.5px; line-height: 23px; font-weight: normal; color: rgb(25, 27, 35); letter-spacing: 1.898px; margin-right: -1.898px;">532</div>
<div class="t" style="right: 680.5px; top: 784.8px; font-size: 17.5px; line-height: 23px; font-weight: normal; color: rgb(25, 27, 35); letter-spacing: 0.979px; margin-right: -0.979px;">4.78</div>
<div class="t" style="right: 550px; top: 784.8px; font-size: 17.5px; line-height: 23px; font-weight: normal; color: rgb(25, 27, 35); letter-spacing: 1.066px; margin-right: -1.066px;">22.2K</div>
<div class="t" style="right: 445.6px; top: 784.8px; font-size: 17.5px; line-height: 23px; font-weight: normal; color: rgb(25, 27, 35); letter-spacing: 1.398px; margin-right: -1.398px;">100</div>
<div class="b" style="left:1165px;top:788.5px;width:15px;height:15px;background:#d1002f;border-radius:50%"></div>
<div class="t" style="left: 1200.5px; top: 783.8px; font-size: 17.5px; line-height: 21px; font-weight: normal; color: rgb(0, 109, 202); letter-spacing: 0.784px;">www.who.int/initiatives/</div>
<div class="t" style="left: 1200.5px; top: 804.8px; font-size: 17.5px; line-height: 21px; font-weight: normal; color: rgb(0, 109, 202); letter-spacing: 0.645px;">behealthy/healthy - diet</div>
<svg class="b" style="left:1411px;top:785.25px" width="18" height="18" viewBox="0 0 18 18" fill="none" stroke="#a9abb6" stroke-width="2.100"><path d="M6.200 5.400H1.050V16.450H12.300V11.400"></path><path d="M10.400 1.100H16.450V7.100"></path><path d="M16.450 1.100L6.300 11.250"></path></svg>
<div class="t" style="right: 54px; top: 784.8px; font-size: 17.5px; line-height: 23px; font-weight: normal; color: rgb(25, 27, 35); letter-spacing: 0.699px; margin-right: -0.699px;">16 hours</div>
<svg class="b" style="left:65.5px;top:870.85px" width="7.7" height="12.3" viewBox="0 0 7.7 12.3" fill="none" stroke="#454855" stroke-width="2.700" stroke-linecap="round" stroke-linejoin="round"><path d="M1.400 1.400L6.250 6.150L1.400 10.900"></path></svg>
<svg class="b" style="left:88.60000000000001px;top:867.1px" width="19.6" height="19.8" viewBox="0 0 19.6 19.8"><rect x="0.800" y="0.800" width="18" height="18.200" rx="4.300" fill="#fff" stroke="#b4b7c3" stroke-width="1.600"></rect></svg>
<svg class="b" style="left:128px;top:867px" width="20" height="20" viewBox="0 0 20 20" fill="none" stroke="#9195a2" stroke-linecap="round"><circle cx="10" cy="10" r="8.700" stroke-width="2.400"></circle><path d="M10 5.700v8.600M5.700 10h8.600" stroke-width="2"></path></svg>
<div class="t" style="left: 153.5px; top: 864.8px; font-size: 17.5px; line-height: 25px; font-weight: normal; color: rgb(0, 109, 202); letter-spacing: 0.51px;">healthy</div>
<div class="t" style="left: 153.5px; top: 889.8px; font-size: 17.5px; line-height: 25px; font-weight: normal; color: rgb(0, 109, 202); letter-spacing: 0.979px;">food</div>
<svg class="b" style="left:197.5px;top:894.9px" width="16.5" height="15" viewBox="0 0 16.5 15" fill="none" stroke="#a9abb6" stroke-width="2.200"><rect x="1.100" y="1.100" width="14.300" height="12.500" rx="1"></rect><path d="M1 6.100h14.500"></path><path d="M12.300 1v2.500"></path></svg>
<div class="b" style="left:315.5px;top:867px;width:20px;height:20px;background:#c4e5fe;border-radius:5px"></div>
<svg class="b" style="left:324.5px;top:871.8px" width="2.1" height="10.6" viewBox="0 0 2.1 10.6"><rect width="2.100" height="10.600" fill="#006dca"></rect></svg>
<div class="t" style="right:1134.7px;top:865.80px;font-size:17.5px;line-height:23px;font-weight:normal;color:#191b23;">9</div>
<svg class="b" style="left:486px;top:870.75px" width="19" height="16" viewBox="0 0 19 16"><path d="M0 0h18.250v5.250h-2.250v-2h-13.250v10.250h4l1.600 2.500h-8.350z" fill="#a9abb6"></path><circle cx="13" cy="10.750" r="3.250" fill="none" stroke="#a9abb6" stroke-width="2.100"></circle><path d="M15.400 13.200l2.700 2.200" stroke="#a9abb6" stroke-width="2.400" stroke-linecap="round"></path></svg>
<div class="b" style="left:516px;top:864.5px;width:1.2px;height:25px;background:#c4c7cf"></div>
<svg class="b" style="left:527.1px;top:870.7px" width="20" height="13" viewBox="0 0 20 13" fill="none" stroke="#a9abb6" stroke-width="2.400"><path d="M8.400 1.400H6.200A4.900 4.900 0 0 0 6.200 11.200H8.400"></path><path d="M11.600 1.400H13.800A4.900 4.900 0 0 1 13.800 11.200H11.600"></path><path d="M6.500 6.300H13.500"></path></svg>
<svg class="b" style="left:556.9px;top:866.9px" width="20.2" height="20.2" viewBox="0 0 20.2 20.2"><g transform="translate(10.100 10.100)"><circle cx="0" cy="-5.700" r="4.400" fill="#a9abb6"></circle><circle cx="5.700" cy="0" r="4.400" fill="#a9abb6"></circle><circle cx="0" cy="5.700" r="4.400" fill="#a9abb6"></circle><circle cx="-5.700" cy="0" r="4.400" fill="#a9abb6"></circle><circle r="6.400" fill="#a9abb6"></circle><path d="M0 -6.500Q2.300 -2.300 6.500 0Q2.300 2.300 0 6.500Q-2.300 2.300 -6.500 0Q-2.300 -2.300 0 -6.500Z" fill="#fff"></path></g></svg>
<svg class="b" style="left:588.1999999999999px;top:869.4px" width="17.2" height="15" viewBox="0 0 17.2 15"><rect x="1.100" y="1.100" width="15" height="12.700" rx="0.800" fill="none" stroke="#a9abb6" stroke-width="2.200"></rect><circle cx="5" cy="5.100" r="1.300" fill="#a9abb6"></circle><path d="M2 11.100l1.800-1.700 2.700 2.700 5.600-6.500 3.400 3.100" fill="none" stroke="#a9abb6" stroke-width="2"></path></svg>
<div class="t" style="left: 618px; top: 865.8px; font-size: 17.5px; line-height: 23px; font-weight: normal; color: rgb(89, 92, 105); letter-spacing: 0.547px;">+4</div>
<svg class="b" style="left:617.2px;top:887px" width="23" height="2" viewBox="0 0 23 2"><path d="M0 .750h23" stroke="#595c69" stroke-width="1.400" stroke-dasharray="3.500 3"></path></svg>
<div class="t" style="right: 811px; top: 865.8px; font-size: 17.5px; line-height: 23px; font-weight: normal; color: rgb(25, 27, 35); letter-spacing: 1.898px; margin-right: -1.898px;">370</div>
<div class="t" style="right: 680.5px; top: 865.8px; font-size: 17.5px; line-height: 23px; font-weight: normal; color: rgb(25, 27, 35); letter-spacing: 0.979px; margin-right: -0.979px;">3.33</div>
<div class="t" style="right: 550px; top: 865.8px; font-size: 17.5px; line-height: 23px; font-weight: normal; color: rgb(25, 27, 35); letter-spacing: 1.43px; margin-right: -1.43px;">74K</div>
<div class="t" style="right: 445.6px; top: 865.8px; font-size: 17.5px; line-height: 23px; font-weight: normal; color: rgb(25, 27, 35); letter-spacing: 1.398px; margin-right: -1.398px;">100</div>
<div class="b" style="left:1165px;top:869.5px;width:15px;height:15px;background:#d1002f;border-radius:50%"></div>
<div class="t" style="left: 1200.5px; top: 864.8px; font-size: 17.5px; line-height: 21px; font-weight: normal; color: rgb(0, 109, 202); letter-spacing: 0.784px;">www.who.int/initiatives/</div>
<div class="t" style="left: 1200.5px; top: 885.8px; font-size: 17.5px; line-height: 21px; font-weight: normal; color: rgb(0, 109, 202); letter-spacing: 0.645px;">behealthy/healthy - diet</div>
<svg class="b" style="left:1411px;top:866.25px" width="18" height="18" viewBox="0 0 18 18" fill="none" stroke="#a9abb6" stroke-width="2.100"><path d="M6.200 5.400H1.050V16.450H12.300V11.400"></path><path d="M10.400 1.100H16.450V7.100"></path><path d="M16.450 1.100L6.300 11.250"></path></svg>
<div class="t" style="right: 54px; top: 865.8px; font-size: 17.5px; line-height: 23px; font-weight: normal; color: rgb(25, 27, 35); letter-spacing: 0.604px; margin-right: -0.604px;">7 hours</div>
<svg class="b" style="left:65.5px;top:951.35px" width="7.7" height="12.3" viewBox="0 0 7.7 12.3" fill="none" stroke="#454855" stroke-width="2.700" stroke-linecap="round" stroke-linejoin="round"><path d="M1.400 1.400L6.250 6.150L1.400 10.900"></path></svg>
<svg class="b" style="left:88.60000000000001px;top:947.6px" width="19.6" height="19.8" viewBox="0 0 19.6 19.8"><rect x="0.800" y="0.800" width="18" height="18.200" rx="4.300" fill="#fff" stroke="#b4b7c3" stroke-width="1.600"></rect></svg>
<svg class="b" style="left:128px;top:947.5px" width="20" height="20" viewBox="0 0 20 20" fill="none" stroke="#9195a2" stroke-linecap="round"><circle cx="10" cy="10" r="8.700" stroke-width="2.400"></circle><path d="M10 5.700v8.600M5.700 10h8.600" stroke-width="2"></path></svg>
<div class="t" style="left: 153.5px; top: 945.8px; font-size: 17.5px; line-height: 25px; font-weight: normal; color: rgb(0, 109, 202); letter-spacing: 0.46px;">diet and</div>
<div class="t" style="left: 153.5px; top: 970.8px; font-size: 17.5px; line-height: 25px; font-weight: normal; color: rgb(0, 109, 202); letter-spacing: 0.76px;">diet</div>
<svg class="b" style="left:191.0px;top:975.4px" width="16.5" height="15" viewBox="0 0 16.5 15" fill="none" stroke="#a9abb6" stroke-width="2.200"><rect x="1.100" y="1.100" width="14.300" height="12.500" rx="1"></rect><path d="M1 6.100h14.500"></path><path d="M12.300 1v2.500"></path></svg>
<div class="b" style="left:315.5px;top:947.5px;width:20px;height:20px;background:#c4e5fe;border-radius:5px"></div>
<svg class="b" style="left:324.5px;top:952.3px" width="2.1" height="10.6" viewBox="0 0 2.1 10.6"><rect width="2.100" height="10.600" fill="#006dca"></rect></svg>
<svg class="b" style="left:445.79999999999995px;top:947.4px" width="20.2" height="20.2" viewBox="0 0 20.2 20.2"><g transform="translate(10.100 10.100)"><circle cx="0" cy="-5.700" r="4.400" fill="#006dca"></circle><circle cx="5.700" cy="0" r="4.400" fill="#006dca"></circle><circle cx="0" cy="5.700" r="4.400" fill="#006dca"></circle><circle cx="-5.700" cy="0" r="4.400" fill="#006dca"></circle><circle r="6.400" fill="#006dca"></circle><path d="M0 -6.500Q2.300 -2.300 6.500 0Q2.300 2.300 0 6.500Q-2.300 2.300 -6.500 0Q-2.300 -2.300 0 -6.500Z" fill="#fff"></path></g></svg>
<svg class="b" style="left:486px;top:951.25px" width="19" height="16" viewBox="0 0 19 16"><path d="M0 0h18.250v5.250h-2.250v-2h-13.250v10.250h4l1.600 2.500h-8.350z" fill="#a9abb6"></path><circle cx="13" cy="10.750" r="3.250" fill="none" stroke="#a9abb6" stroke-width="2.100"></circle><path d="M15.400 13.200l2.700 2.200" stroke="#a9abb6" stroke-width="2.400" stroke-linecap="round"></path></svg>
<div class="b" style="left:516px;top:945.0px;width:1.2px;height:25px;background:#c4c7cf"></div>
<svg class="b" style="left:527.1px;top:951.2px" width="20" height="13" viewBox="0 0 20 13" fill="none" stroke="#a9abb6" stroke-width="2.400"><path d="M8.400 1.400H6.200A4.900 4.900 0 0 0 6.200 11.200H8.400"></path><path d="M11.600 1.400H13.800A4.900 4.900 0 0 1 13.800 11.200H11.600"></path><path d="M6.500 6.300H13.500"></path></svg>
<svg class="b" style="left:556.9px;top:947.4px" width="20.2" height="20.2" viewBox="0 0 20.2 20.2"><g transform="translate(10.100 10.100)"><circle cx="0" cy="-5.700" r="4.400" fill="#a9abb6"></circle><circle cx="5.700" cy="0" r="4.400" fill="#a9abb6"></circle><circle cx="0" cy="5.700" r="4.400" fill="#a9abb6"></circle><circle cx="-5.700" cy="0" r="4.400" fill="#a9abb6"></circle><circle r="6.400" fill="#a9abb6"></circle><path d="M0 -6.500Q2.300 -2.300 6.500 0Q2.300 2.300 0 6.500Q-2.300 2.300 -6.500 0Q-2.300 -2.300 0 -6.500Z" fill="#fff"></path></g></svg>
<svg class="b" style="left:587.1px;top:949.1px" width="20" height="18" viewBox="0 0 20 18"><rect x="1.200" y="1.200" width="13.600" height="11.700" rx="0.800" fill="none" stroke="#a9abb6" stroke-width="2.400"></rect><circle cx="5.100" cy="4.800" r="1.250" fill="#a9abb6"></circle><path d="M2 11.500l2.500-2.200 2.800 2.200 7.200-6.500" fill="none" stroke="#a9abb6" stroke-width="2"></path><path d="M18.600 4v13.700H3" fill="none" stroke="#a9abb6" stroke-width="2.100"></path></svg>
<div class="t" style="left: 618px; top: 946.8px; font-size: 17.5px; line-height: 23px; font-weight: normal; color: rgb(89, 92, 105); letter-spacing: 0.547px;">+4</div>
<svg class="b" style="left:617.2px;top:967.5px" width="23" height="2" viewBox="0 0 23 2"><path d="M0 .750h23" stroke="#595c69" stroke-width="1.400" stroke-dasharray="3.500 3"></path></svg>
<div class="t" style="right: 811px; top: 946.8px; font-size: 17.5px; line-height: 23px; font-weight: normal; color: rgb(25, 27, 35); letter-spacing: 1.898px; margin-right: -1.898px;">269</div>
<div class="t" style="right: 680.5px; top: 946.8px; font-size: 17.5px; line-height: 23px; font-weight: normal; color: rgb(25, 27, 35); letter-spacing: 0.979px; margin-right: -0.979px;">2.42</div>
<div class="t" style="right: 550px; top: 946.8px; font-size: 17.5px; line-height: 23px; font-weight: normal; color: rgb(25, 27, 35); letter-spacing: 1.066px; margin-right: -1.066px;">22.2K</div>
<div class="t" style="right: 445.6px; top: 946.8px; font-size: 17.5px; line-height: 23px; font-weight: normal; color: rgb(25, 27, 35); letter-spacing: 1.398px; margin-right: -1.398px;">100</div>
<div class="b" style="left:1165px;top:950.0px;width:15px;height:15px;background:#d1002f;border-radius:50%"></div>
<div class="t" style="left: 1200.5px; top: 945.8px; font-size: 17.5px; line-height: 21px; font-weight: normal; color: rgb(0, 109, 202); letter-spacing: 0.784px;">www.who.int/initiatives/</div>
<div class="t" style="left: 1200.5px; top: 966.8px; font-size: 17.5px; line-height: 21px; font-weight: normal; color: rgb(0, 109, 202); letter-spacing: 0.645px;">behealthy/healthy - diet</div>
<svg class="b" style="left:1411px;top:946.75px" width="18" height="18" viewBox="0 0 18 18" fill="none" stroke="#a9abb6" stroke-width="2.100"><path d="M6.200 5.400H1.050V16.450H12.300V11.400"></path><path d="M10.400 1.100H16.450V7.100"></path><path d="M16.450 1.100L6.300 11.250"></path></svg>
<div class="t" style="right: 54px; top: 946.8px; font-size: 17.5px; line-height: 23px; font-weight: normal; color: rgb(25, 27, 35); letter-spacing: 0.699px; margin-right: -0.699px;">16 hours</div>
<svg class="b" style="left:65.5px;top:1032.35px" width="7.7" height="12.3" viewBox="0 0 7.7 12.3" fill="none" stroke="#454855" stroke-width="2.700" stroke-linecap="round" stroke-linejoin="round"><path d="M1.400 1.400L6.250 6.150L1.400 10.900"></path></svg>
<svg class="b" style="left:88.60000000000001px;top:1028.6px" width="19.6" height="19.8" viewBox="0 0 19.6 19.8"><rect x="0.800" y="0.800" width="18" height="18.200" rx="4.300" fill="#fff" stroke="#b4b7c3" stroke-width="1.600"></rect></svg>
<svg class="b" style="left:128px;top:1028.5px" width="20" height="20" viewBox="0 0 20 20" fill="none" stroke="#9195a2" stroke-linecap="round"><circle cx="10" cy="10" r="8.700" stroke-width="2.400"></circle><path d="M10 5.700v8.600M5.700 10h8.600" stroke-width="2"></path></svg>
<div class="t" style="left: 153.5px; top: 1026.8px; font-size: 17.5px; line-height: 25px; font-weight: normal; color: rgb(0, 109, 202); letter-spacing: 0.67px;">consuming</div>
<div class="t" style="left: 153.5px; top: 1051.8px; font-size: 17.5px; line-height: 25px; font-weight: normal; color: rgb(0, 109, 202); letter-spacing: 0.51px;">healthy</div>
<div class="t" style="left: 153.5px; top: 1076.8px; font-size: 17.5px; line-height: 25px; font-weight: normal; color: rgb(0, 109, 202); letter-spacing: 0.979px;">food</div>
<svg class="b" style="left:197.5px;top:1081.4px" width="16.5" height="15" viewBox="0 0 16.5 15" fill="none" stroke="#a9abb6" stroke-width="2.200"><rect x="1.100" y="1.100" width="14.300" height="12.500" rx="1"></rect><path d="M1 6.100h14.500"></path><path d="M12.300 1v2.500"></path></svg>
<div class="b" style="left:315.5px;top:1028.5px;width:20px;height:20px;background:#c4e5fe;border-radius:5px"></div>
<svg class="b" style="left:324.5px;top:1033.3px" width="2.1" height="10.6" viewBox="0 0 2.1 10.6"><rect width="2.100" height="10.600" fill="#006dca"></rect></svg>
<svg class="b" style="left:447px;top:1028.0px" width="18" height="19.5" viewBox="0 0 18 19.5"><path d="M1.400 1.400h14.700v12.500h-9.600l-5.100 4.100z" fill="none" stroke="#006dca" stroke-width="2.700" stroke-linejoin="round"></path></svg>
<div class="t" style="left:452.9px;top:1030.30px;font-size:10.5px;line-height:12px;font-weight:bold;color:#006dca;">?</div>
<svg class="b" style="left:486px;top:1032.25px" width="19" height="16" viewBox="0 0 19 16"><path d="M0 0h18.250v5.250h-2.250v-2h-13.250v10.250h4l1.600 2.500h-8.350z" fill="#a9abb6"></path><circle cx="13" cy="10.750" r="3.250" fill="none" stroke="#a9abb6" stroke-width="2.100"></circle><path d="M15.400 13.200l2.700 2.200" stroke="#a9abb6" stroke-width="2.400" stroke-linecap="round"></path></svg>
<div class="b" style="left:516px;top:1026.0px;width:1.2px;height:25px;background:#c4c7cf"></div>
<svg class="b" style="left:527.1px;top:1032.2px" width="20" height="13" viewBox="0 0 20 13" fill="none" stroke="#a9abb6" stroke-width="2.400"><path d="M8.400 1.400H6.200A4.900 4.900 0 0 0 6.200 11.200H8.400"></path><path d="M11.600 1.400H13.800A4.900 4.900 0 0 1 13.800 11.200H11.600"></path><path d="M6.500 6.300H13.500"></path></svg>
<svg class="b" style="left:556.9px;top:1028.4px" width="20.2" height="20.2" viewBox="0 0 20.2 20.2"><g transform="translate(10.100 10.100)"><circle cx="0" cy="-5.700" r="4.400" fill="#a9abb6"></circle><circle cx="5.700" cy="0" r="4.400" fill="#a9abb6"></circle><circle cx="0" cy="5.700" r="4.400" fill="#a9abb6"></circle><circle cx="-5.700" cy="0" r="4.400" fill="#a9abb6"></circle><circle r="6.400" fill="#a9abb6"></circle><path d="M0 -6.500Q2.300 -2.300 6.500 0Q2.300 2.300 0 6.500Q-2.300 2.300 -6.500 0Q-2.300 -2.300 0 -6.500Z" fill="#fff"></path></g></svg>
<svg class="b" style="left:587.1px;top:1030.1px" width="20" height="18" viewBox="0 0 20 18"><rect x="1.200" y="1.200" width="13.600" height="11.700" rx="0.800" fill="none" stroke="#a9abb6" stroke-width="2.400"></rect><circle cx="5.100" cy="4.800" r="1.250" fill="#a9abb6"></circle><path d="M2 11.500l2.500-2.200 2.800 2.200 7.200-6.500" fill="none" stroke="#a9abb6" stroke-width="2"></path><path d="M18.600 4v13.700H3" fill="none" stroke="#a9abb6" stroke-width="2.100"></path></svg>
<div class="t" style="left: 618px; top: 1027.8px; font-size: 17.5px; line-height: 23px; font-weight: normal; color: rgb(89, 92, 105); letter-spacing: 0.547px;">+4</div>
<svg class="b" style="left:617.2px;top:1048.5px" width="23" height="2" viewBox="0 0 23 2"><path d="M0 .750h23" stroke="#595c69" stroke-width="1.400" stroke-dasharray="3.500 3"></path></svg>
<div class="t" style="right: 811px; top: 1027.8px; font-size: 17.5px; line-height: 23px; font-weight: normal; color: rgb(25, 27, 35); letter-spacing: 1.898px; margin-right: -1.898px;">180</div>
<div class="t" style="right: 680.5px; top: 1027.8px; font-size: 17.5px; line-height: 23px; font-weight: normal; color: rgb(25, 27, 35); letter-spacing: 0.979px; margin-right: -0.979px;">1.62</div>
<div class="t" style="right: 550px; top: 1027.8px; font-size: 17.5px; line-height: 23px; font-weight: normal; color: rgb(25, 27, 35); letter-spacing: 0.667px; margin-right: -0.667px;">4.4K</div>
<div class="t" style="right: 445.6px; top: 1027.8px; font-size: 17.5px; line-height: 23px; font-weight: normal; color: rgb(25, 27, 35); letter-spacing: 1.398px; margin-right: -1.398px;">100</div>
<div class="b" style="left:1165px;top:1031.0px;width:15px;height:15px;background:#d1002f;border-radius:50%"></div>
<div class="t" style="left: 1200.5px; top: 1026.8px; font-size: 17.5px; line-height: 21px; font-weight: normal; color: rgb(0, 109, 202); letter-spacing: 0.784px;">www.who.int/initiatives/</div>
<div class="t" style="left: 1200.5px; top: 1047.8px; font-size: 17.5px; line-height: 21px; font-weight: normal; color: rgb(0, 109, 202); letter-spacing: 0.645px;">behealthy/healthy - diet</div>
<svg class="b" style="left:1411px;top:1027.75px" width="18" height="18" viewBox="0 0 18 18" fill="none" stroke="#a9abb6" stroke-width="2.100"><path d="M6.200 5.400H1.050V16.450H12.300V11.400"></path><path d="M10.400 1.100H16.450V7.100"></path><path d="M16.450 1.100L6.300 11.250"></path></svg>
<div class="t" style="right: 54px; top: 1027.8px; font-size: 17.5px; line-height: 23px; font-weight: normal; color: rgb(25, 27, 35); letter-spacing: 0.487px; margin-right: -0.487px;">3 days</div>
<svg class="b" style="left:65.5px;top:1137.85px" width="7.7" height="12.3" viewBox="0 0 7.7 12.3" fill="none" stroke="#454855" stroke-width="2.700" stroke-linecap="round" stroke-linejoin="round"><path d="M1.400 1.400L6.250 6.150L1.400 10.900"></path></svg>
<svg class="b" style="left:88.60000000000001px;top:1134.1px" width="19.6" height="19.8" viewBox="0 0 19.6 19.8"><rect x="0.800" y="0.800" width="18" height="18.200" rx="4.300" fill="#fff" stroke="#b4b7c3" stroke-width="1.600"></rect></svg>
<svg class="b" style="left:128px;top:1134px" width="20" height="20" viewBox="0 0 20 20" fill="none" stroke="#9195a2" stroke-linecap="round"><circle cx="10" cy="10" r="8.700" stroke-width="2.400"></circle><path d="M10 5.700v8.600M5.700 10h8.600" stroke-width="2"></path></svg>
<div class="t" style="left: 153.5px; top: 1131.8px; font-size: 17.5px; line-height: 25px; font-weight: normal; color: rgb(0, 109, 202); letter-spacing: 0.653px;">what about</div>
<div class="t" style="left: 153.5px; top: 1156.8px; font-size: 17.5px; line-height: 25px; font-weight: normal; color: rgb(0, 109, 202); letter-spacing: 0.51px;">healthy</div>
<div class="t" style="left: 153.5px; top: 1181.8px; font-size: 17.5px; line-height: 25px; font-weight: normal; color: rgb(0, 109, 202); letter-spacing: 0.979px;">food</div>
<svg class="b" style="left:197.5px;top:1186.9px" width="16.5" height="15" viewBox="0 0 16.5 15" fill="none" stroke="#a9abb6" stroke-width="2.200"><rect x="1.100" y="1.100" width="14.300" height="12.500" rx="1"></rect><path d="M1 6.100h14.500"></path><path d="M12.300 1v2.500"></path></svg>
<div class="b" style="left:315.5px;top:1134px;width:20px;height:20px;background:#c4e5fe;border-radius:5px"></div>
<svg class="b" style="left:324.5px;top:1138.8px" width="2.1" height="10.6" viewBox="0 0 2.1 10.6"><rect width="2.100" height="10.600" fill="#006dca"></rect></svg>
<div class="t" style="right:1134.7px;top:1132.80px;font-size:17.5px;line-height:23px;font-weight:normal;color:#191b23;">1</div>
<svg class="b" style="left:486px;top:1137.75px" width="19" height="16" viewBox="0 0 19 16"><path d="M0 0h18.250v5.250h-2.250v-2h-13.250v10.250h4l1.600 2.500h-8.350z" fill="#a9abb6"></path><circle cx="13" cy="10.750" r="3.250" fill="none" stroke="#a9abb6" stroke-width="2.100"></circle><path d="M15.400 13.200l2.700 2.200" stroke="#a9abb6" stroke-width="2.400" stroke-linecap="round"></path></svg>
<div class="b" style="left:516px;top:1131.5px;width:1.2px;height:25px;background:#c4c7cf"></div>
<svg class="b" style="left:527.1px;top:1137.7px" width="20" height="13" viewBox="0 0 20 13" fill="none" stroke="#a9abb6" stroke-width="2.400"><path d="M8.400 1.400H6.200A4.900 4.900 0 0 0 6.200 11.200H8.400"></path><path d="M11.600 1.400H13.800A4.900 4.900 0 0 1 13.800 11.200H11.600"></path><path d="M6.500 6.300H13.500"></path></svg>
<svg class="b" style="left:556.9px;top:1133.9px" width="20.2" height="20.2" viewBox="0 0 20.2 20.2"><g transform="translate(10.100 10.100)"><circle cx="0" cy="-5.700" r="4.400" fill="#a9abb6"></circle><circle cx="5.700" cy="0" r="4.400" fill="#a9abb6"></circle><circle cx="0" cy="5.700" r="4.400" fill="#a9abb6"></circle><circle cx="-5.700" cy="0" r="4.400" fill="#a9abb6"></circle><circle r="6.400" fill="#a9abb6"></circle><path d="M0 -6.500Q2.300 -2.300 6.500 0Q2.300 2.300 0 6.500Q-2.300 2.300 -6.500 0Q-2.300 -2.300 0 -6.500Z" fill="#fff"></path></g></svg>
<svg class="b" style="left:587.1px;top:1135.6px" width="20" height="18" viewBox="0 0 20 18"><rect x="1.200" y="1.200" width="13.600" height="11.700" rx="0.800" fill="none" stroke="#a9abb6" stroke-width="2.400"></rect><circle cx="5.100" cy="4.800" r="1.250" fill="#a9abb6"></circle><path d="M2 11.500l2.500-2.200 2.800 2.200 7.200-6.500" fill="none" stroke="#a9abb6" stroke-width="2"></path><path d="M18.600 4v13.700H3" fill="none" stroke="#a9abb6" stroke-width="2.100"></path></svg>
<div class="t" style="left: 618px; top: 1132.8px; font-size: 17.5px; line-height: 23px; font-weight: normal; color: rgb(89, 92, 105); letter-spacing: 0.547px;">+5</div>
<svg class="b" style="left:617.2px;top:1154px" width="23" height="2" viewBox="0 0 23 2"><path d="M0 .750h23" stroke="#595c69" stroke-width="1.400" stroke-dasharray="3.500 3"></path></svg>
<div class="t" style="right: 811px; top: 1132.8px; font-size: 17.5px; line-height: 23px; font-weight: normal; color: rgb(25, 27, 35); letter-spacing: 1.898px; margin-right: -1.898px;">171</div>
<div class="t" style="right: 680.5px; top: 1132.8px; font-size: 17.5px; line-height: 23px; font-weight: normal; color: rgb(25, 27, 35); letter-spacing: 0.979px; margin-right: -0.979px;">1.53</div>
<div class="t" style="right: 550px; top: 1132.8px; font-size: 17.5px; line-height: 23px; font-weight: normal; color: rgb(25, 27, 35); letter-spacing: 0.667px; margin-right: -0.667px;">1.3K</div>
<div class="t" style="right: 445.6px; top: 1132.8px; font-size: 17.5px; line-height: 23px; font-weight: normal; color: rgb(25, 27, 35); letter-spacing: 2.531px; margin-right: -2.531px;">97</div>
<div class="b" style="left:1165px;top:1136.5px;width:15px;height:15px;background:#d1002f;border-radius:50%"></div>
<div class="t" style="left: 1200.5px; top: 1131.8px; font-size: 17.5px; line-height: 21px; font-weight: normal; color: rgb(0, 109, 202); letter-spacing: 0.784px;">www.who.int/initiatives/</div>
<div class="t" style="left: 1200.5px; top: 1152.8px; font-size: 17.5px; line-height: 21px; font-weight: normal; color: rgb(0, 109, 202); letter-spacing: 0.645px;">behealthy/healthy - diet</div>
<svg class="b" style="left:1411px;top:1133.25px" width="18" height="18" viewBox="0 0 18 18" fill="none" stroke="#a9abb6" stroke-width="2.100"><path d="M6.200 5.400H1.050V16.450H12.300V11.400"></path><path d="M10.400 1.100H16.450V7.100"></path><path d="M16.450 1.100L6.300 11.250"></path></svg>
<div class="t" style="right: 54px; top: 1132.8px; font-size: 17.5px; line-height: 23px; font-weight: normal; color: rgb(25, 27, 35); letter-spacing: 0.604px; margin-right: -0.604px;">7 hours</div>
<svg class="b" style="left:65.5px;top:1242.85px" width="7.7" height="12.3" viewBox="0 0 7.7 12.3" fill="none" stroke="#454855" stroke-width="2.700" stroke-linecap="round" stroke-linejoin="round"><path d="M1.400 1.400L6.250 6.150L1.400 10.900"></path></svg>
<svg class="b" style="left:88.60000000000001px;top:1239.1px" width="19.6" height="19.8" viewBox="0 0 19.6 19.8"><rect x="0.800" y="0.800" width="18" height="18.200" rx="4.300" fill="#fff" stroke="#b4b7c3" stroke-width="1.600"></rect></svg>
<svg class="b" style="left:128px;top:1239px" width="20" height="20" viewBox="0 0 20 20" fill="none" stroke="#9195a2" stroke-linecap="round"><circle cx="10" cy="10" r="8.700" stroke-width="2.400"></circle><path d="M10 5.700v8.600M5.700 10h8.600" stroke-width="2"></path></svg>
<div class="t" style="left: 153.5px; top: 1236.8px; font-size: 17.5px; line-height: 25px; font-weight: normal; color: rgb(0, 109, 202); letter-spacing: 0.604px;">healthy food</div>
<div class="t" style="left: 153.5px; top: 1261.8px; font-size: 17.5px; line-height: 25px; font-weight: normal; color: rgb(0, 109, 202); letter-spacing: 0.51px;">healthy</div>
<svg class="b" style="left:220.0px;top:1266.9px" width="16.5" height="15" viewBox="0 0 16.5 15" fill="none" stroke="#a9abb6" stroke-width="2.200"><rect x="1.100" y="1.100" width="14.300" height="12.500" rx="1"></rect><path d="M1 6.100h14.500"></path><path d="M12.300 1v2.500"></path></svg>
<div class="b" style="left:315.5px;top:1239px;width:20px;height:20px;background:#c4e5fe;border-radius:5px"></div>
<svg class="b" style="left:324.5px;top:1243.8px" width="2.1" height="10.6" viewBox="0 0 2.1 10.6"><rect width="2.100" height="10.600" fill="#006dca"></rect></svg>
<div class="t" style="right:1134.7px;top:1237.80px;font-size:17.5px;line-height:23px;font-weight:normal;color:#191b23;">8</div>
<svg class="b" style="left:486px;top:1242.75px" width="19" height="16" viewBox="0 0 19 16"><path d="M0 0h18.250v5.250h-2.250v-2h-13.250v10.250h4l1.600 2.500h-8.350z" fill="#a9abb6"></path><circle cx="13" cy="10.750" r="3.250" fill="none" stroke="#a9abb6" stroke-width="2.100"></circle><path d="M15.400 13.200l2.700 2.200" stroke="#a9abb6" stroke-width="2.400" stroke-linecap="round"></path></svg>
<div class="b" style="left:516px;top:1236.5px;width:1.2px;height:25px;background:#c4c7cf"></div>
<svg class="b" style="left:527.1px;top:1242.7px" width="20" height="13" viewBox="0 0 20 13" fill="none" stroke="#a9abb6" stroke-width="2.400"><path d="M8.400 1.400H6.200A4.900 4.900 0 0 0 6.200 11.200H8.400"></path><path d="M11.600 1.400H13.800A4.900 4.900 0 0 1 13.800 11.200H11.600"></path><path d="M6.500 6.300H13.500"></path></svg>
<svg class="b" style="left:556.9px;top:1238.9px" width="20.2" height="20.2" viewBox="0 0 20.2 20.2"><g transform="translate(10.100 10.100)"><circle cx="0" cy="-5.700" r="4.400" fill="#a9abb6"></circle><circle cx="5.700" cy="0" r="4.400" fill="#a9abb6"></circle><circle cx="0" cy="5.700" r="4.400" fill="#a9abb6"></circle><circle cx="-5.700" cy="0" r="4.400" fill="#a9abb6"></circle><circle r="6.400" fill="#a9abb6"></circle><path d="M0 -6.500Q2.300 -2.300 6.500 0Q2.300 2.300 0 6.500Q-2.300 2.300 -6.500 0Q-2.300 -2.300 0 -6.500Z" fill="#fff"></path></g></svg>
<svg class="b" style="left:588.1999999999999px;top:1241.4px" width="17.2" height="15" viewBox="0 0 17.2 15"><rect x="1.100" y="1.100" width="15" height="12.700" rx="0.800" fill="none" stroke="#a9abb6" stroke-width="2.200"></rect><circle cx="5" cy="5.100" r="1.300" fill="#a9abb6"></circle><path d="M2 11.100l1.800-1.700 2.700 2.700 5.600-6.500 3.400 3.100" fill="none" stroke="#a9abb6" stroke-width="2"></path></svg>
<div class="t" style="left: 618px; top: 1237.8px; font-size: 17.5px; line-height: 23px; font-weight: normal; color: rgb(89, 92, 105); letter-spacing: 0.547px;">+5</div>
<svg class="b" style="left:617.2px;top:1259px" width="23" height="2" viewBox="0 0 23 2"><path d="M0 .750h23" stroke="#595c69" stroke-width="1.400" stroke-dasharray="3.500 3"></path></svg>
<div class="t" style="right: 811px; top: 1237.8px; font-size: 17.5px; line-height: 23px; font-weight: normal; color: rgb(25, 27, 35); letter-spacing: 1.898px; margin-right: -1.898px;">133</div>
<div class="t" style="right: 680.5px; top: 1237.8px; font-size: 17.5px; line-height: 23px; font-weight: normal; color: rgb(25, 27, 35); letter-spacing: 0.979px; margin-right: -0.979px;">1.19</div>
<div class="t" style="right: 550px; top: 1237.8px; font-size: 17.5px; line-height: 23px; font-weight: normal; color: rgb(25, 27, 35); letter-spacing: 1.066px; margin-right: -1.066px;">14.8K</div>
<div class="t" style="right: 445.6px; top: 1237.8px; font-size: 17.5px; line-height: 23px; font-weight: normal; color: rgb(25, 27, 35); letter-spacing: 1.398px; margin-right: -1.398px;">100</div>
<div class="b" style="left:1165px;top:1241.5px;width:15px;height:15px;background:#d1002f;border-radius:50%"></div>
<div class="t" style="left: 1200.5px; top: 1236.8px; font-size: 17.5px; line-height: 21px; font-weight: normal; color: rgb(0, 109, 202); letter-spacing: 0.784px;">www.who.int/initiatives/</div>
<div class="t" style="left: 1200.5px; top: 1257.8px; font-size: 17.5px; line-height: 21px; font-weight: normal; color: rgb(0, 109, 202); letter-spacing: 0.645px;">behealthy/healthy - diet</div>
<svg class="b" style="left:1411px;top:1238.25px" width="18" height="18" viewBox="0 0 18 18" fill="none" stroke="#a9abb6" stroke-width="2.100"><path d="M6.200 5.400H1.050V16.450H12.300V11.400"></path><path d="M10.400 1.100H16.450V7.100"></path><path d="M16.450 1.100L6.300 11.250"></path></svg>
<div class="t" style="right: 54px; top: 1237.8px; font-size: 17.5px; line-height: 23px; font-weight: normal; color: rgb(25, 27, 35); letter-spacing: 0.699px; margin-right: -0.699px;">23 hours</div>
<div class="b" style="left:0px;top:1195px;width:1600px;height:89px;background:linear-gradient(to bottom,rgba(255,255,255,0) 0%,rgba(255,255,255,.28) 30%,rgba(255,255,255,.52) 60%,rgba(255,255,255,.86) 88%,#fff 100%)"></div>


</body></html>
